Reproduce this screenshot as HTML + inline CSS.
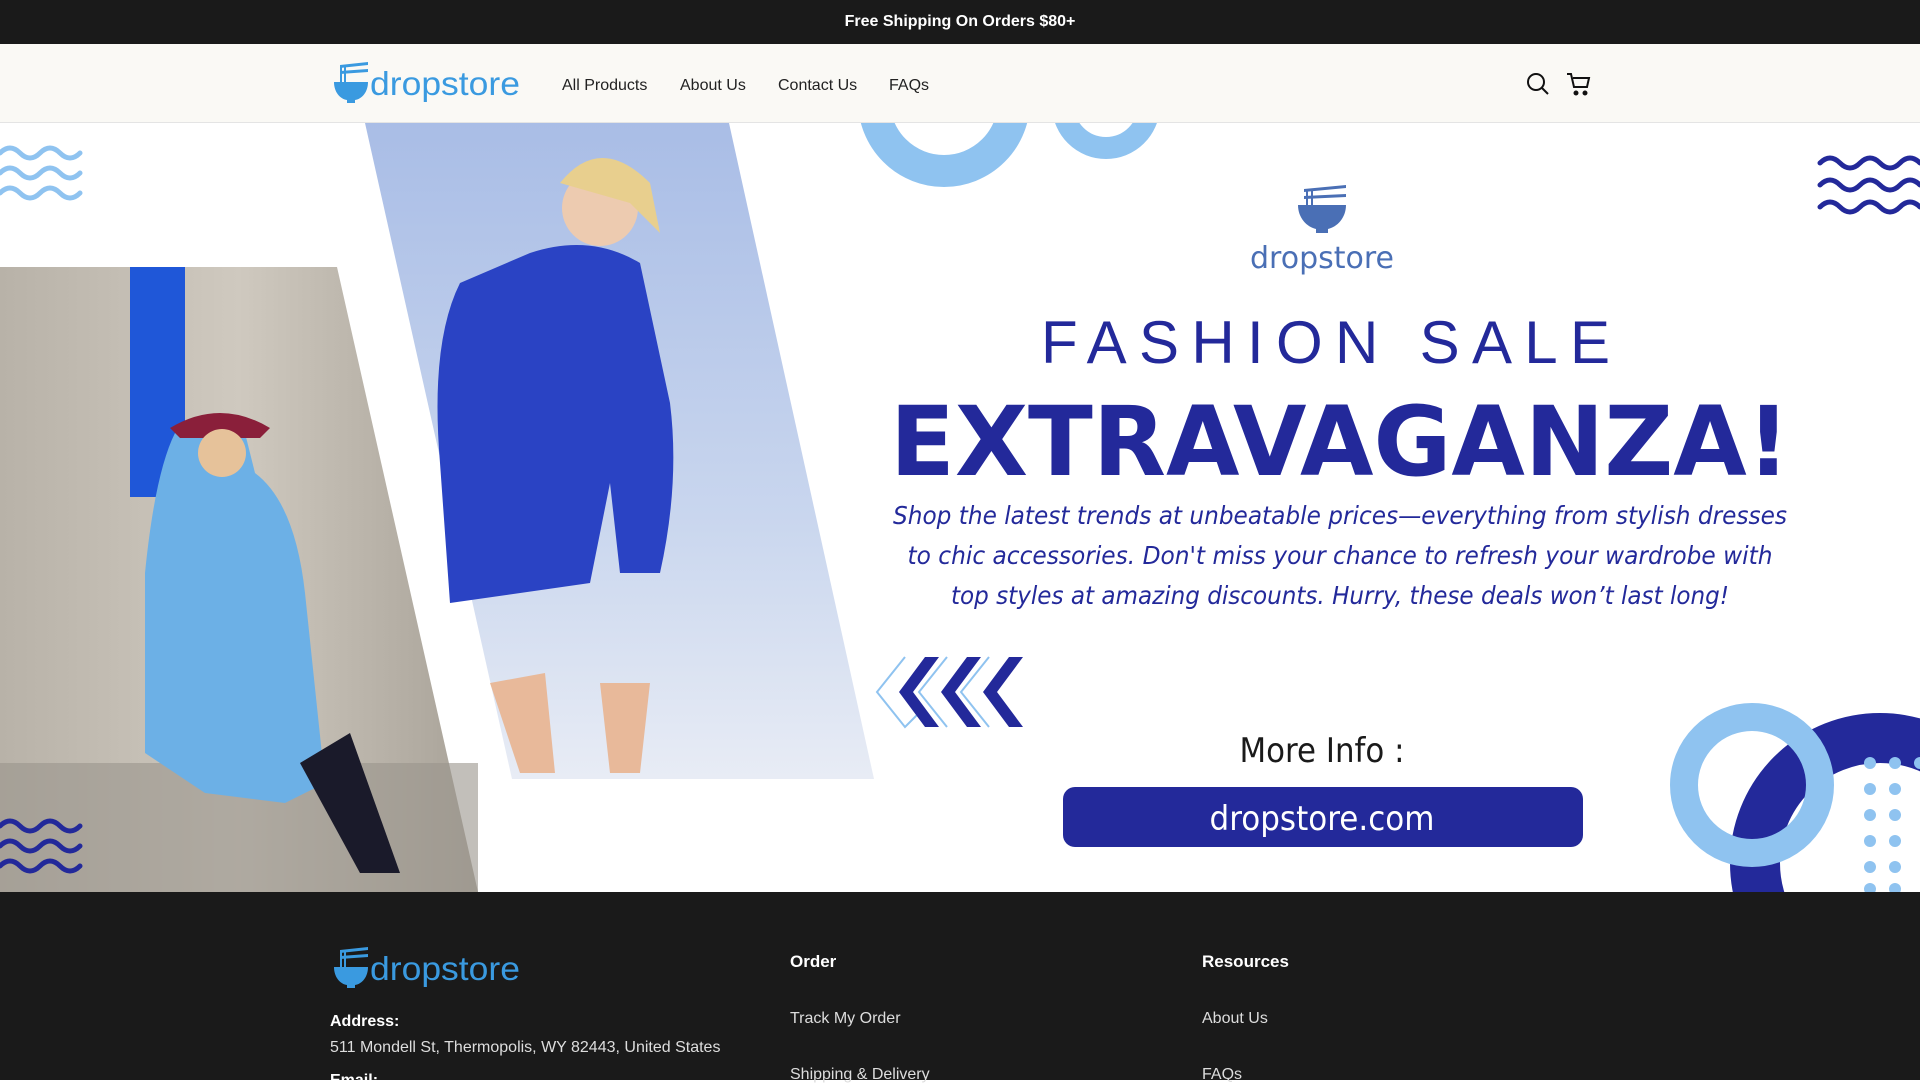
<!DOCTYPE html>
<html><head><meta charset="utf-8"><style>
*{margin:0;padding:0;box-sizing:border-box}
body{width:1920px;height:1080px;overflow:hidden;font-family:"Liberation Sans",sans-serif;background:#fff;position:relative}
.top{position:absolute;left:0;top:0;width:1920px;height:44px;background:#1a1a1a;color:#fff;font-weight:bold;font-size:16px;text-align:center;line-height:44px}
.hdr{position:absolute;left:0;top:44px;width:1920px;height:79px;background:#faf9f5;border-bottom:1px solid #e4e4e4}
.nav{position:absolute;top:33px;font-size:16px;color:#222}
.ban{position:absolute;left:0;top:123px}
.ft{position:absolute;left:0;top:892px;width:1920px;height:188px;background:#1a1a1a;color:#fff}
.ft .h{position:absolute;font-weight:bold;font-size:17px}
.ft .l{position:absolute;font-size:16px;color:#ddd}
</style></head><body>
<div class="top">Free Shipping On Orders $80+</div>
<div class="hdr">
 <svg style="position:absolute;left:330px;top:18px" width="200" height="44" viewBox="0 0 200 44">
  <g fill="#3a9ae0"><path d="M4 20h34c0 10-6 17-13 18v3h-8v-3c-7-1-13-8-13-18z"/><rect x="10" y="3" width="2" height="17"/><rect x="14" y="3" width="2" height="17"/><path d="M10 3l28-3v3l-28 3z"/><path d="M10 9l28-2v3l-28 2z"/></g>
  <text x="40" y="33" font-family="Liberation Sans" font-size="33" fill="#3a9ae0" textLength="150" lengthAdjust="spacingAndGlyphs">dropstore</text>
 </svg>
 <div class="nav" style="left:562px">All Products</div>
 <div class="nav" style="left:680px">About Us</div>
 <div class="nav" style="left:778px">Contact Us</div>
 <div class="nav" style="left:889px">FAQs</div>
 <svg style="position:absolute;left:1526px;top:28px" width="24" height="24" viewBox="0 0 24 24" fill="none" stroke="#111" stroke-width="2"><circle cx="10" cy="10" r="8"/><path d="M16 16l6 6"/></svg>
 <svg style="position:absolute;left:1566px;top:27px" width="26" height="26" viewBox="0 0 26 26" fill="none" stroke="#111" stroke-width="2"><path d="M1 3h4l3 13h13l2-9H7"/><circle cx="10" cy="22" r="1.5" fill="#111"/><circle cx="19" cy="22" r="1.5" fill="#111"/></svg>
</div>
<svg class="ban" width="1920" height="769" viewBox="0 0 1920 769">
 <defs>
  <linearGradient id="sky" x1="0" y1="0" x2="0" y2="1"><stop offset="0" stop-color="#a9bde6"/><stop offset=".6" stop-color="#c9d6ee"/><stop offset="1" stop-color="#e8ecf5"/></linearGradient>
  <linearGradient id="stone" x1="0" y1="0" x2="1" y2="0"><stop offset="0" stop-color="#b8b2a8"/><stop offset=".5" stop-color="#cfc9bf"/><stop offset="1" stop-color="#a8a298"/></linearGradient>
 </defs>
 <polygon points="0,144 337,144 478,769 0,769" fill="url(#stone)"/>
 <rect x="130" y="144" width="55" height="230" fill="#1f57d8"/>
 <polygon points="0,640 478,640 478,769 0,769" fill="#9a958c" opacity=".6"/>
 <path d="M175 310 q40-20 70 0 l10 40 q40 30 50 120 l20 190 -40 20 -80-10 -60-40 0-180 q10-100 30-140z" fill="#6cb0e6"/>
 <path d="M170 305 q50-30 100 0 l-10 10 -80 0z" fill="#8a1f3a"/>
 <circle cx="222" cy="330" r="24" fill="#e6c29a"/>
 <path d="M300 640 l60 110 40 0 -50-140z" fill="#1a1a2a"/>
 <polygon points="365,0 729,0 874,656 512,656" fill="url(#sky)"/>
 <path d="M530 130 q60-20 110 10 l30 140 q10 80-10 170 l-40 0 -10-90 -20 100 -140 20 -10-140 q-10-120 20-180z" fill="#2a43c4"/>
 <circle cx="600" cy="85" r="38" fill="#edcbb0"/>
 <path d="M560 60 q40-50 90 0 l10 50 -30-30z" fill="#e8cf8e"/>
 <path d="M490 560 l30 90 35 0 -10-100z M600 560 l10 90 30 0 10-90z" fill="#e8b99a"/>
 <circle cx="944" cy="-22" r="70" fill="none" stroke="#8fc3f0" stroke-width="32"/>
 <circle cx="1106" cy="-18" r="43" fill="none" stroke="#8fc3f0" stroke-width="22"/>
 <g fill="none" stroke-width="5" stroke-linecap="round">
  <g stroke="#8fc3f0"><path d="M0 30 q10-10 20 0 t20 0 t20 0 t20 0"/><path d="M0 50 q10-10 20 0 t20 0 t20 0 t20 0"/><path d="M0 70 q10-10 20 0 t20 0 t20 0 t20 0"/></g>
  <g stroke="#23299a"><path d="M0 703 q10-10 20 0 t20 0 t20 0 t20 0"/><path d="M0 723 q10-10 20 0 t20 0 t20 0 t20 0"/><path d="M0 743 q10-10 20 0 t20 0 t20 0 t20 0"/></g>
  <g stroke="#23299a"><path d="M1820 40 q10-10 20 0 t20 0 t20 0 t20 0 t20 0"/><path d="M1820 62 q10-10 20 0 t20 0 t20 0 t20 0 t20 0"/><path d="M1820 84 q10-10 20 0 t20 0 t20 0 t20 0 t20 0"/></g>
 </g>
 <g fill="#4a6fb5"><path d="M1298 82h48c0 13-9 22-18 24v4h-12v-4c-9-2-18-11-18-24z"/><rect x="1306" y="68" width="2" height="14"/><rect x="1311" y="68" width="2" height="14"/><path d="M1304 66l42-4v3l-42 4z"/><path d="M1304 73l42-2v3l-42 2z"/></g>
 <text x="1322" y="145" text-anchor="middle" font-family="DejaVu Sans" font-size="30" fill="#4a6fb5">dropstore</text>
 <text x="1041" y="240" font-family="Liberation Sans" font-size="60" fill="#23299a" textLength="569" lengthAdjust="spacing">FASHION SALE</text>
 <text x="890" y="352" font-family="DejaVu Sans" font-weight="bold" font-size="96" fill="#23299a" textLength="900" lengthAdjust="spacingAndGlyphs">EXTRAVAGANZA!</text>
 <g font-family="DejaVu Sans" font-style="italic" font-size="25" fill="#23299a" text-anchor="middle">
  <text x="1340" y="401" textLength="894" lengthAdjust="spacingAndGlyphs">Shop the latest trends at unbeatable prices—everything from stylish dresses</text>
  <text x="1340" y="441" textLength="865" lengthAdjust="spacingAndGlyphs">to chic accessories. Don't miss your chance to refresh your wardrobe with</text>
  <text x="1340" y="481" textLength="778" lengthAdjust="spacingAndGlyphs">top styles at amazing discounts. Hurry, these deals won’t last long!</text>
 </g>
 <g fill="none" stroke="#8fc3f0" stroke-width="2"><path d="M905 534 l-28 35 28 35 12-12"/><path d="M947 534 l-28 35 28 35"/><path d="M989 534 l-28 35 28 35"/></g>
 <g fill="#23299a"><path d="M925 534 l14 0 -26 35 26 35 -14 0 -26-35z"/><path d="M967 534 l14 0 -26 35 26 35 -14 0 -26-35z"/><path d="M1009 534 l14 0 -26 35 26 35 -14 0 -26-35z"/></g>
 <text x="1322" y="639" text-anchor="middle" font-family="DejaVu Sans" font-size="34" fill="#1a1a1a" textLength="165" lengthAdjust="spacingAndGlyphs">More Info :</text>
 <rect x="1063" y="664" width="520" height="60" rx="12" fill="#23299a"/>
 <text x="1322" y="707" text-anchor="middle" font-family="DejaVu Sans" font-size="34" fill="#fff" textLength="225" lengthAdjust="spacingAndGlyphs">dropstore.com</text>
 <circle cx="1880" cy="740" r="125" fill="none" stroke="#23299a" stroke-width="50"/>
 <g fill="#8fc3f0">
  <circle cx="1870" cy="640" r="6"/><circle cx="1895" cy="640" r="6"/><circle cx="1920" cy="640" r="6"/>
  <circle cx="1870" cy="666" r="6"/><circle cx="1895" cy="666" r="6"/><circle cx="1870" cy="692" r="6"/><circle cx="1895" cy="692" r="6"/>
  <circle cx="1870" cy="718" r="6"/><circle cx="1895" cy="718" r="6"/><circle cx="1870" cy="744" r="6"/><circle cx="1895" cy="744" r="6"/>
  <circle cx="1870" cy="766" r="6"/><circle cx="1895" cy="766" r="6"/>
 </g>
 <circle cx="1752" cy="662" r="68" fill="none" stroke="#8fc3f0" stroke-width="28"/>
</svg>
<div class="ft">
 <svg style="position:absolute;left:330px;top:55px" width="200" height="44" viewBox="0 0 200 44">
  <g fill="#3a9ae0"><path d="M4 20h34c0 10-6 17-13 18v3h-8v-3c-7-1-13-8-13-18z"/><rect x="10" y="3" width="2" height="17"/><rect x="14" y="3" width="2" height="17"/><path d="M10 3l28-3v3l-28 3z"/><path d="M10 9l28-2v3l-28 2z"/></g>
  <text x="40" y="33" font-family="Liberation Sans" font-size="33" fill="#3a9ae0" textLength="150" lengthAdjust="spacingAndGlyphs">dropstore</text>
 </svg>
 <div class="h" style="left:790px;top:60px">Order</div>
 <div class="h" style="left:1202px;top:60px">Resources</div>
 <div class="h" style="left:330px;top:121px;font-size:16px">Address:</div>
 <div class="l" style="left:330px;top:147px">511 Mondell St, Thermopolis, WY 82443, United States</div>
 <div class="h" style="left:330px;top:180px;font-size:16px">Email:</div>
 <div class="l" style="left:790px;top:118px">Track My Order</div>
 <div class="l" style="left:790px;top:174px">Shipping &amp; Delivery</div>
 <div class="l" style="left:1202px;top:118px">About Us</div>
 <div class="l" style="left:1202px;top:174px">FAQs</div>
</div>
</body></html>
